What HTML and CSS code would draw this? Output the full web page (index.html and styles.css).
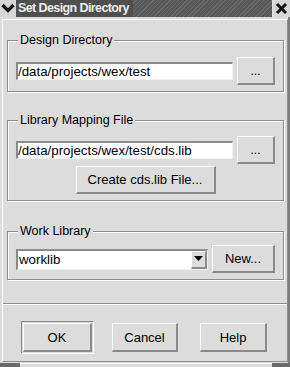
FILE: index.html
```html
<!DOCTYPE html>
<html lang="en">
<head>
  <meta charset="UTF-8">
  <title>Set Design Directory</title>
  <link rel="stylesheet" href="styles.css">
</head>
<body>
  <div class="titlebar">
    <span class="tb-menu">
      <svg width="16" height="17" viewBox="0 0 16 17"><polyline points="2.5,5 8,10.5 13.5,5" fill="none" stroke="#111" stroke-width="3.2"/></svg>
    </span>
    <span class="tb-title">Set Design Directory</span>
    <span class="tb-stripes"></span>
    <span class="tb-close">
      <svg width="17" height="17" viewBox="0 0 17 17"><path d="M4 4 L13 13 M13 4 L4 13" stroke="#111" stroke-width="3"/></svg>
    </span>
  </div>

  <div class="frame">
    <div class="panel">
      <div class="group group-dir">
        <div class="legend">Design Directory</div>
        <div class="row">
          <div class="entry">/data/projects/wex/test</div>
          <button class="btn btn-browse">...</button>
        </div>
      </div>

      <div class="group group-lib">
        <div class="legend">Library Mapping File</div>
        <div class="row row-lib">
          <div class="entry">/data/projects/wex/test/cds.lib</div>
          <button class="btn btn-browse">...</button>
        </div>
        <div class="center">
          <button class="btn btn-create">Create cds.lib File...</button>
        </div>
      </div>

      <div class="group group-work">
        <div class="legend">Work Library</div>
        <div class="row row-work">
          <div class="combo">
            <div class="combo-text">worklib</div>
            <div class="combo-arrow">
              <svg width="9" height="6" viewBox="0 0 9 6"><polygon points="0,0 9,0 4.5,5" fill="#000"/></svg>
            </div>
          </div>
          <button class="btn btn-new">New...</button>
        </div>
      </div>

      <div class="separator"></div>

      <div class="actions">
        <div class="default-ring"><button class="btn btn-action">OK</button></div>
        <button class="btn btn-action btn-cancel">Cancel</button>
        <button class="btn btn-action btn-help">Help</button>
      </div>
    </div>
  </div>
  <div class="frame-bottom">
    <span class="fb-left"></span>
    <span class="fb-mid"></span>
    <span class="fb-right"></span>
  </div>
</body>
</html>
```

FILE: styles.css
```css
body {
  margin: 0;
  width: 290px;
  height: 367px;
  overflow: hidden;
  background: #dcdcdc;
  font-family: "Liberation Sans", Arial, sans-serif;
  font-size: 12px;
  color: #000;
}

/* title bar */
.titlebar {
  display: flex;
  height: 17px;
  background: #4f4f4f;
}
.tb-menu {
  width: 16px;
  background: #d6d6d6;
  display: flex;
}
.tb-title {
  padding-left: 2px;
  padding-right: 4px;
  color: #ececec;
  font-weight: bold;
  font-size: 12.5px;
  letter-spacing: -0.6px;
  line-height: 17px;
  white-space: nowrap;
}
.tb-stripes {
  flex: 1;
  background: repeating-linear-gradient(135deg, #585858 0px, #585858 2px, #6a6a6a 2px, #6a6a6a 3px);
  border-right: 1px solid #e4e4e4;
}
.tb-close {
  width: 17px;
  background: #d6d6d6;
  display: flex;
}

/* window body */
.frame {
  padding: 2px 0 1px 2px;
  border-right: 2px solid #7c7c7c;
}
.panel {
  border-top: 1px solid #fff;
  border-left: 1px solid #fff;
  border-right: 1px solid #8c8c8c;
  border-bottom: 1px solid #8c8c8c;
  padding-bottom: 7px;
}

.group {
  margin: 0 3px 0 4px;
  border: 1px solid #8c8c8c;
  box-shadow: inset 1px 1px 0 #fff, 1px 1px 0 #fff;
  padding: 0 8px 6px 8px;
}
.group-dir { margin-top: 20px; }
.group-lib { margin-top: 28px; }
.group-work { margin-top: 30px; }

.legend {
  display: table;
  margin: -8px 0 0 2px;
  padding: 0 2px;
  font-size: 12.5px;
  line-height: 14px;
  background: #dcdcdc;
}

.row {
  display: flex;
  align-items: center;
  gap: 4px;
  margin-top: 10px;
}
.row-lib { margin-top: 9px; }
.row-work { margin-top: 7px; }

.entry {
  box-sizing: border-box;
  width: 217px;
  height: 18px;
  background: #fff;
  border-style: solid;
  border-width: 2px 1px 1px 2px;
  border-color: #8a8a8a #f2f2f2 #f2f2f2 #8a8a8a;
  font-size: 13.3px;
  line-height: 15px;
  white-space: nowrap;
  overflow: hidden;
}

.btn {
  box-sizing: border-box;
  height: 28px;
  padding: 0;
  background: #dcdcdc;
  border-style: solid;
  border-width: 1px 2px 2px 1px;
  border-color: #fff #8a8a8a #8a8a8a #fff;
  font-family: "Liberation Sans", Arial, sans-serif;
  font-size: 13px;
  color: #000;
}
.btn-browse { width: 38px; font-size: 12px; }

.center {
  display: flex;
  justify-content: center;
  margin-top: 2px;
}
.btn-create { width: 140px; }

.combo {
  box-sizing: border-box;
  display: flex;
  width: 192px;
  height: 21px;
  border-style: solid;
  border-width: 2px 1px 1px 2px;
  border-color: #8a8a8a #f2f2f2 #f2f2f2 #8a8a8a;
  background: #fff;
}
.combo-text {
  flex: 1;
  font-size: 13.3px;
  line-height: 17px;
  padding-left: 1px;
}
.combo-arrow {
  box-sizing: border-box;
  width: 16px;
  background: #dcdcdc;
  border-style: solid;
  border-width: 1px 2px 2px 1px;
  border-color: #fff #8a8a8a #8a8a8a #fff;
  display: flex;
  align-items: center;
  justify-content: center;
}
.btn-new { width: 63px; }

.separator {
  margin-top: 23px;
  border-top: 1px solid #8c8c8c;
  border-bottom: 1px solid #fff;
}

.actions {
  display: flex;
  align-items: center;
  margin-top: 16px;
  padding-left: 18px;
}
.default-ring {
  box-sizing: border-box;
  width: 73px;
  height: 33px;
  padding: 1px;
  border-style: solid;
  border-width: 1px;
  border-color: #8a8a8a #fff #fff #8a8a8a;
}
.btn-action { height: 29px; }
.default-ring .btn-action { width: 69px; }
.btn-cancel { width: 66px; margin-left: 18px; }
.btn-help { width: 67px; margin-left: 22px; }

.frame-bottom {
  display: flex;
  height: 5px;
}
.fb-left { width: 20px; background: #6a6a6a; }
.fb-mid { flex: 1; background: #dcdcdc; border-top: 1px solid #fff; }
.fb-right { width: 18px; background: #6a6a6a; }
```
